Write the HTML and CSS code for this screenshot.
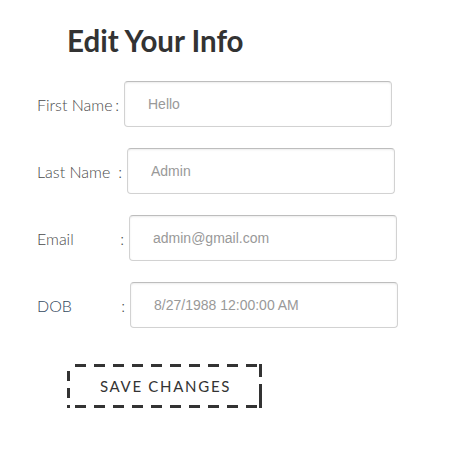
FILE: index.html
```html
<!DOCTYPE html>
<html>
<head>
<meta charset="utf-8">
<link rel="stylesheet" href="styles.css">
</head>
<body>
<div class="page">
  <h1 class="title">Edit Your Info</h1>
  <form class="form">
    <div class="row">
      <label class="label label-first"><span>First Name</span><span>:</span></label>
      <input class="field" type="text" value="Hello">
    </div>
    <div class="row">
      <label class="label label-last"><span>Last Name</span><span>:</span></label>
      <input class="field" type="text" value="Admin">
    </div>
    <div class="row">
      <label class="label label-email"><span>Email</span><span>:</span></label>
      <input class="field" type="text" value="admin@gmail.com">
    </div>
    <div class="row">
      <label class="label label-dob"><span class="dob">DOB</span><span>:</span></label>
      <input class="field" type="text" value="8/27/1988 12:00:00 AM">
    </div>
    <div class="actions">
      <button class="save" type="button">SAVE CHANGES</button>
    </div>
  </form>
</div>
</body>
</html>
```
FILE: styles.css
```css
* { box-sizing: border-box; }
html, body { margin: 0; padding: 0; background: #fff; }
body { font-family: Lato, "Open Sans", sans-serif; color: #444; }
.page { padding: 23px 0 0 37px; }
.title {
  margin: 0 0 0 30px;
  font-size: 29.5px;
  font-weight: 700;
  color: #333;
  line-height: 36px;
}
.form { display: flex; flex-direction: column; gap: 21px; margin-top: 22px; }
.row { display: flex; align-items: center; }
.label {
  display: flex;
  justify-content: space-between;
  font-size: 16px;
  font-weight: 300;
  color: #4a4a4a;
}
.label-first { width: 82px; }
.label-last { width: 85px; }
.label-email { width: 87px; }
.label-dob { width: 88px; }
.dob { color: #34495e; }
.field {
  margin-left: 5px;
  width: 268px;
  height: 46px;
  border: 1px solid #d2d2d2;
  border-top-color: #bdbdbd;
  border-radius: 4px;
  box-shadow: inset 0 1px 2px rgba(0,0,0,0.08);
  padding: 0 0 0 23px;
  font-family: "Liberation Sans", Arial, sans-serif;
  font-size: 14px;
  color: #999;
  background: #fff;
}
.actions { padding: 15px 0 0 30px; }
.save {
  width: 195px;
  height: 44px;
  border: none;
  background-color: #fff;
  background-image:
    repeating-linear-gradient(90deg, transparent 0 8px, #333 8px 19px),
    repeating-linear-gradient(90deg, transparent 0 8px, #333 8px 19px),
    repeating-linear-gradient(180deg, transparent 0 7px, #333 7px 17px),
    repeating-linear-gradient(180deg, #333 0 13px, transparent 13px 20px, #333 20px 44px);
  background-size: 100% 3px, 100% 3px, 3px 100%, 3px 100%;
  background-position: left top, left bottom, left top, right top;
  background-repeat: no-repeat;
  font-family: Lato, sans-serif;
  font-size: 15px;
  letter-spacing: 1.7px;
  color: #333;
  padding: 0 0 0 2px;
}
```
